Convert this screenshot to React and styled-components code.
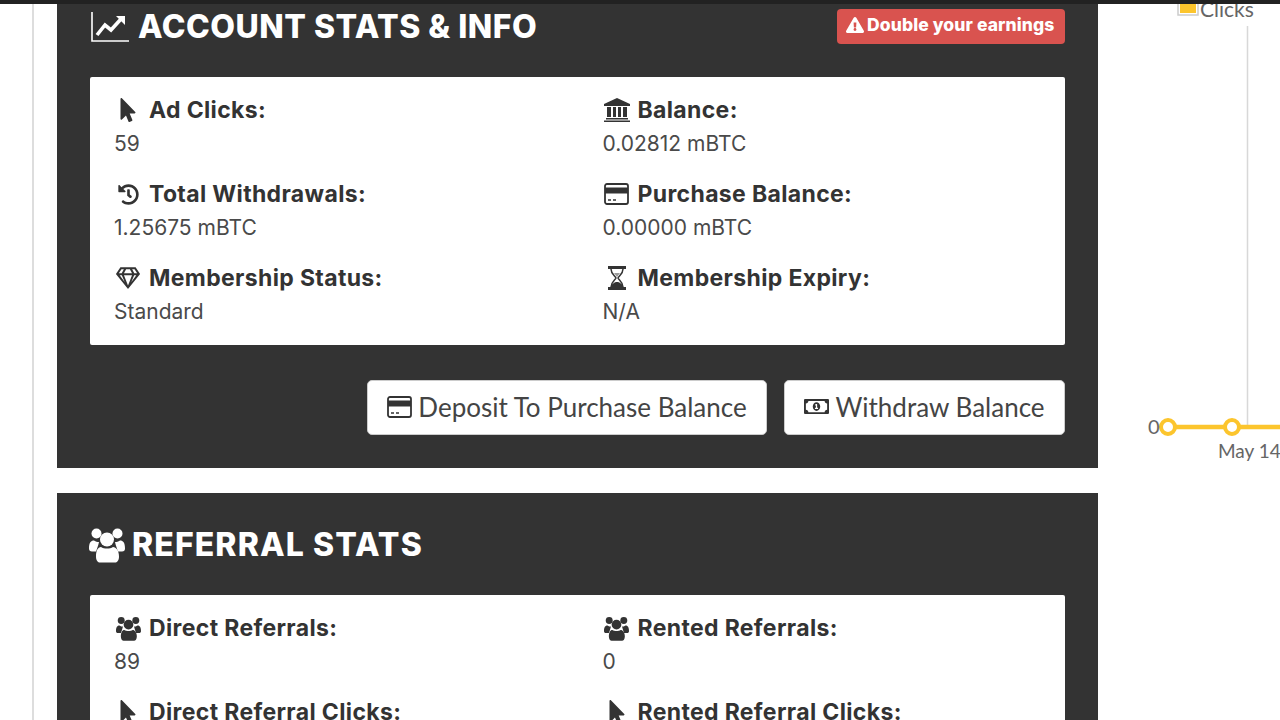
import styled, { createGlobalStyle } from "styled-components";
import {
	FaExclamationTriangle,
	FaHistory,
	FaMousePointer,
	FaRegGem,
	FaRegMoneyBillAlt,
} from "react-icons/fa";

// font awesome 4 look, the packaged ones are too flat for these
const ChartIcon = () => (
	<svg width="38" height="30" viewBox="0 0 38 30" fill="none" stroke="currentColor">
		<path d="M1 0V29H38" strokeWidth="1.6" />
		<path d="M6 23L14 13L20 18L30 7" strokeWidth="3.6" />
		<path d="M25 4H34V13Z" fill="currentColor" stroke="none" />
	</svg>
);

const UsersIcon = ({ size }) => (
	<svg width={size} height={size} viewBox="0 0 36 35" fill="currentColor">
		<circle cx="7.5" cy="6" r="5" />
		<circle cx="28.5" cy="6" r="5" />
		<path d="M0 21C0 15 2 13 5 13C7 14.500 8 14.500 10 14.500C9 19 8 21 7 24H3C1 24 0 23 0 21Z" />
		<path d="M36 21C36 15 34 13 31 13C29 14.500 28 14.500 26 14.500C27 19 28 21 29 24H33C35 24 36 23 36 21Z" />
		<circle cx="18" cy="12" r="7" />
		<path d="M7 29C7 23 9 19.500 12 19.500C15 21.500 21 21.500 24 19.500C27 19.500 30 23 30 29C30 33 28 35 26 35H11C9 35 7 33 7 29Z" />
	</svg>
);

const BankIcon = () => (
	<svg width="26" height="24" viewBox="0 0 26 24" fill="currentColor">
		<path d="M13 0L26 6V8H0V6Z" />
		<path d="M3 9H7V19H3ZM9 9H12V19H9ZM14 9H17V19H14ZM19 9H23V19H19Z" />
		<path d="M2 20H24V21.500H2ZM0 22.500H26V24H0Z" />
	</svg>
);

const HourglassIcon = () => (
	<svg width="20" height="24" viewBox="0 0 20 24" fill="none" stroke="currentColor">
		<path d="M1 1.500H19M1 22.500H19" strokeWidth="3" />
		<path d="M4 3C4 8 8 10 9 12C8 14 4 16 4 21M16 3C16 8 12 10 11 12C12 14 16 16 16 21" strokeWidth="1.500" />
		<path d="M4 21C4 18 8 16 10 16C12 16 16 18 16 21Z" fill="currentColor" stroke="none" />
		<path d="M7 7H13L10 11Z" fill="currentColor" stroke="none" opacity="0.5" />
	</svg>
);

const CardIcon = () => (
	<svg width="25" height="22" viewBox="0 0 25 22" fill="none" stroke="currentColor">
		<rect x="1" y="1" width="23" height="20" rx="2" strokeWidth="1.800" />
		<path d="M1 7.500H24" strokeWidth="6" />
		<path d="M4 17H7M9 17H12" strokeWidth="1.400" />
	</svg>
);

const accountStats = [
	{ icon: <FaMousePointer />, label: "Ad Clicks:", value: "59" },
	{ icon: <BankIcon />, label: "Balance:", value: "0.02812 mBTC" },
	{ icon: <FaHistory size={21} />, label: "Total Withdrawals:", value: "1.25675 mBTC" },
	{ icon: <CardIcon />, label: "Purchase Balance:", value: "0.00000 mBTC" },
	{ icon: <FaRegGem />, label: "Membership Status:", value: "Standard" },
	{ icon: <HourglassIcon />, label: "Membership Expiry:", value: "N/A" },
];

const referralStats = [
	{ icon: <UsersIcon size={25} />, label: "Direct Referrals:", value: "89" },
	{ icon: <UsersIcon size={25} />, label: "Rented Referrals:", value: "0" },
	{ icon: <FaMousePointer />, label: "Direct Referral Clicks:" },
	{ icon: <FaMousePointer />, label: "Rented Referral Clicks:" },
];

const StatGrid = ({ items }) => (
	<Card>
		{items.map(({ icon, label, value }) => (
			<Stat key={label}>
				<StatLabel>
					<IconSlot>{icon}</IconSlot>
					{label}
				</StatLabel>
				{value && <StatValue>{value}</StatValue>}
			</Stat>
		))}
	</Card>
);

const ClicksChart = () => (
	<svg width="140" height="470" viewBox="1140 0 140 470">
		<line x1="1247.5" y1="26" x2="1247.5" y2="427" stroke="#d8d8d8" strokeWidth="1.5" />
		<rect x="1178" y="-4" width="20" height="19" fill="#fff" stroke="#ccc" strokeWidth="1.5" />
		<rect x="1180" y="-2" width="16" height="15" fill="#fcc52d" />
		<text x="1200" y="17" fontFamily="Lato, sans-serif" fontSize="21" fill="#666">Clicks</text>
		<line x1="1168" y1="427" x2="1280" y2="427" stroke="#fcc52d" strokeWidth="4.5" />
		<circle cx="1168" cy="427" r="7" fill="#fff" stroke="#fcc52d" strokeWidth="4" />
		<circle cx="1232" cy="427" r="7" fill="#fff" stroke="#fcc52d" strokeWidth="4" />
		<text x="1148" y="434" fontFamily="Lato, sans-serif" fontSize="20" fill="#666">0</text>
		<text x="1218" y="458" fontFamily="Lato, sans-serif" fontSize="19" fill="#666">May 14</text>
	</svg>
);

const App = () => (
	<>
		<GlobalStyle />
		<Page>
			<TopBar />
			<Gutter />
			<Main>
				<Panel $top={4}>
					<PanelHeader>
						<PanelTitle>
							<ChartIcon />
							ACCOUNT STATS &amp; INFO
						</PanelTitle>
						<Badge>
							<FaExclamationTriangle />
							Double your earnings
						</Badge>
					</PanelHeader>
					<StatGrid items={accountStats} />
					<Actions>
						<ActionButton $width={400}>
							<CardIcon />
							Deposit To Purchase Balance
						</ActionButton>
						<ActionButton $width={281}>
							<FaRegMoneyBillAlt />
							Withdraw Balance
						</ActionButton>
					</Actions>
				</Panel>
				<Panel $top={29}>
					<PanelHeader>
						<PanelTitle $shift={-1} $gap={7} $spacing={1.1}>
							<UsersIcon size={36} />
							REFERRAL STATS
						</PanelTitle>
					</PanelHeader>
					<StatGrid items={referralStats} />
				</Panel>
			</Main>
			<ChartColumn>
				<ClicksChart />
			</ChartColumn>
		</Page>
	</>
);

const GlobalStyle = createGlobalStyle`
	html, body {
		margin: 0;
		height: 100%;
		background: #fff;
		overflow: hidden;
	}
`;

const Page = styled.div`
	position: relative;
	display: flex;
	height: 720px;
	overflow: hidden;
	font-family: Inter, "Liberation Sans", sans-serif;
	color: #333;
`;

const TopBar = styled.div`
	position: absolute;
	top: 0;
	left: 0;
	right: 0;
	height: 4px;
	background: #222;
`;

const Gutter = styled.div`
	flex: none;
	box-sizing: border-box;
	width: 34px;
	border-right: 2px solid #ddd;
`;

const Main = styled.main`
	flex: none;
	display: flex;
	flex-direction: column;
	gap: 25px;
	width: 1041px;
	margin-left: 23px;
`;

const Panel = styled.section`
	flex: none;
	padding: ${(props) => props.$top}px 33px 33px;
	background: #333;
`;

const PanelHeader = styled.header`
	display: flex;
	align-items: center;
	justify-content: space-between;
	height: 45px;
	margin-bottom: 28px;
`;

const PanelTitle = styled.h2`
	display: flex;
	align-items: center;
	gap: ${(props) => props.$gap || 9}px;
	margin: 0 0 0 ${(props) => props.$shift || 1}px;
	font-size: 32px;
	font-weight: 800;
	letter-spacing: ${(props) => props.$spacing || 0.5}px;
	color: #fff;
`;

const Badge = styled.a`
	display: flex;
	align-items: center;
	gap: 3px;
	box-sizing: border-box;
	width: 228px;
	height: 35px;
	padding: 0 0 4px 9px;
	border-radius: 4px;
	background: #d9534f;
	font-size: 17.5px;
	font-weight: 800;
	letter-spacing: 0.1px;
	color: #fff;

	svg {
		font-size: 18px;
	}
`;

const Card = styled.div`
	display: grid;
	grid-template-columns: 488.5px 1fr;
	row-gap: 23px;
	padding: 18px 24px 21px;
	border-radius: 2px;
	background: #fff;
`;

const Stat = styled.div`
	display: flex;
	flex-direction: column;
	gap: 7px;
`;

const StatLabel = styled.div`
	display: flex;
	align-items: center;
	height: 30px;
	font-size: 23px;
	font-weight: 700;
	letter-spacing: 0.35px;
`;

const IconSlot = styled.span`
	display: flex;
	justify-content: center;
	width: 28px;
	margin-right: 7px;
	font-size: 24px;
`;

const StatValue = styled.div`
	height: 24px;
	font-size: 21px;
	line-height: 24px;
	color: #4a4a4a;
`;

const Actions = styled.div`
	display: flex;
	justify-content: flex-end;
	gap: 17px;
	margin-top: 35px;
`;

const ActionButton = styled.button`
	display: flex;
	align-items: center;
	justify-content: center;
	gap: 6px;
	width: ${(props) => props.$width}px;
	height: 55px;
	padding: 0 0 2px;
	border: 1px solid #ccc;
	border-radius: 5px;
	background: #fff;
	font-family: Lato, sans-serif;
	font-size: 26px;
	color: #444;

	svg {
		color: #333;
		font-size: 25px;
	}
`;

const ChartColumn = styled.aside`
	flex: none;
	width: 140px;
	margin-left: 42px;
`;

export default App;
